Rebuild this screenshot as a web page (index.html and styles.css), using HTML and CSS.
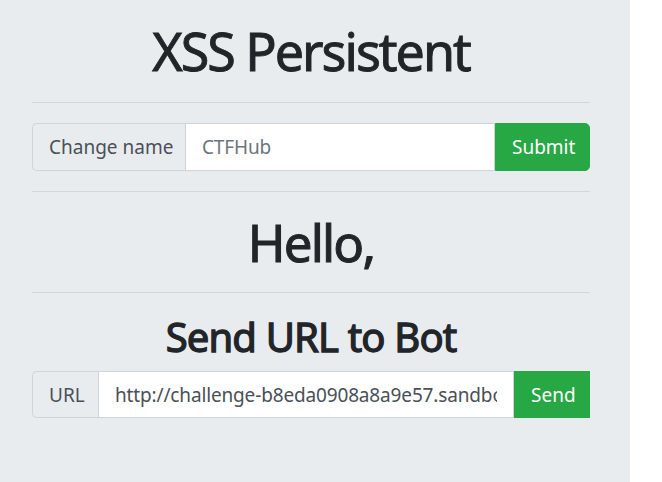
FILE: index.html
```html
<!DOCTYPE html>
<html lang="en">
<head>
<meta charset="utf-8">
<title>XSS Persistent</title>
<link rel="stylesheet" href="styles.css">
</head>
<body>
<div class="jumbo">
  <h1 class="title">XSS Persistent</h1>
  <hr class="rule">
  <form class="group group-name">
    <span class="addon">Change name</span>
    <input class="field" type="text" placeholder="CTFHub">
    <button class="btn btn-round" type="button">Submit</button>
  </form>
  <hr class="rule">
  <h1 class="hello">Hello,</h1>
  <hr class="rule">
  <h2 class="send">Send URL to Bot</h2>
  <form class="group group-url">
    <span class="addon">URL</span>
    <input class="field field-url" type="text" value="http://challenge-b8eda0908a8a9e57.sandbox.ctfhub.com:10080/">
    <button class="btn" type="button">Send</button>
  </form>
</div>
</body>
</html>
```

FILE: styles.css
```css
html, body {
  margin: 0;
  padding: 0;
  background: #ffffff;
}

body {
  font-family: "Noto Sans", "Open Sans", sans-serif;
  color: #212529;
}

.jumbo {
  box-sizing: border-box;
  width: 630px;
  min-height: 482px;
  padding: 21px 40px 0 32px;
  background: #e9ecef;
}

.title {
  margin: 0;
  font-size: 52px;
  line-height: 60px;
  font-weight: 400;
  letter-spacing: -2px;
  -webkit-text-stroke: 0.9px #212529;
  text-align: center;
}

.rule {
  margin: 21px 0 0;
  border: 0;
  border-top: 1px solid #d3d6d9;
  height: 0;
}

.group {
  display: flex;
  margin: 20px 0 0;
  font-size: 19px;
}

.group-name {
  height: 48px;
}

.group + .rule {
  margin-top: 20px;
}

.group-url {
  height: 47px;
  margin-top: 10px;
}

.addon {
  display: flex;
  align-items: center;
  box-sizing: border-box;
  padding: 0 15px 0 16px;
  border: 1px solid #ced4da;
  border-right: 0;
  border-radius: 5px 0 0 5px;
  background: #e9ecef;
  color: #495057;
  white-space: nowrap;
}

.group-name .addon {
  width: 153px;
}

.group-url .addon {
  width: 66px;
}

.field {
  flex: 1;
  min-width: 0;
  margin: 0;
  padding: 0 16px;
  border: 1px solid #ced4da;
  background: #ffffff;
  color: #495057;
  font: inherit;
  letter-spacing: -0.15px;
  outline: none;
}

.field::placeholder {
  color: #6c757d;
}

.btn {
  margin: 0;
  padding: 0 16px;
  border: 1px solid #28a745;
  background: #28a745;
  color: #ffffff;
  font: inherit;
  border-radius: 0;
}

.group-name .btn {
  width: 95px;
}

.group-url .btn {
  width: 76px;
}

.btn-round {
  border-radius: 0 5px 5px 0;
}

.hello {
  margin: 20px 0 0;
  font-size: 51px;
  line-height: 60px;
  font-weight: 400;
  letter-spacing: -1.8px;
  -webkit-text-stroke: 1px #212529;
  text-align: center;
}

.hello + .rule {
  margin-top: 20px;
}

.send {
  margin: 20px 0 0;
  font-size: 40px;
  line-height: 48px;
  font-weight: 400;
  letter-spacing: -0.85px;
  -webkit-text-stroke: 1.3px #212529;
  text-align: center;
}
```
